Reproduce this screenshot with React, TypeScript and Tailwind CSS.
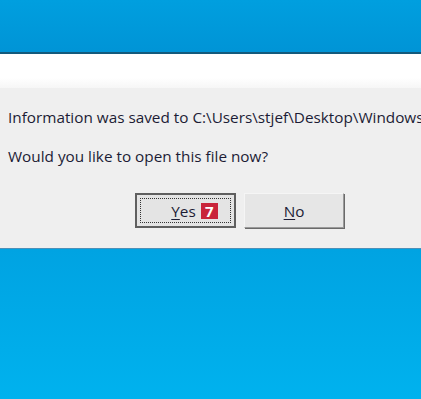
export default function App() {
  return (
    <div className="w-[421px] h-[399px] overflow-hidden flex flex-col" style={{ fontFamily: '"Open Sans", "Noto Sans", sans-serif' }}>
      <div className="h-[52px] shrink-0 bg-gradient-to-b from-[#009fdf] to-[#0094d6]" />
      <div className="h-[2px] shrink-0 bg-[#135a7c]" />
      <div className="h-[34px] shrink-0 bg-gradient-to-b from-white from-70% to-[#f6f6f6]" />
      <div className="h-[160px] shrink-0 bg-[#efefef] flex flex-col pl-[8px] pt-[19px] text-[#1c1c35] text-[15.3px] leading-[20px]">
        <div className="whitespace-nowrap">Information was saved to C:\Users\stjef\Desktop\Windows</div>
        <div className="mt-[19px] whitespace-nowrap">Would you like to open this file now?</div>
        <div className="mt-[27px] flex gap-[8px] pl-[127px]">
          <div className="w-[101px] h-[35px] border-2 border-[#5f5f5f] bg-[#e4e4e4] p-[3px]">
            <div className="h-full border border-dotted border-[#333] flex items-center justify-center gap-[5px] pl-[18px]">
              <span><span className="underline underline-offset-2">Y</span>es</span>
              <span className="w-[17px] h-[16px] bg-[#c9243a] text-white font-bold text-[15px] leading-[16px] flex items-center justify-center">7</span>
            </div>
          </div>
          <div className="w-[100px] h-[35px] border border-[#9a9a9a] border-t-[#f5f5f5] border-l-[#f5f5f5] bg-[#e6e6e6] shadow-[1px_1px_0_#6a6a6a] flex items-center justify-center">
            <span><span className="underline underline-offset-2">N</span>o</span>
          </div>
        </div>
      </div>
      <div className="h-[1px] shrink-0 bg-[#4d90b8]" />
      <div className="flex-1 bg-gradient-to-b from-[#00a3e2] to-[#00b2ee]" />
    </div>
  );
}
